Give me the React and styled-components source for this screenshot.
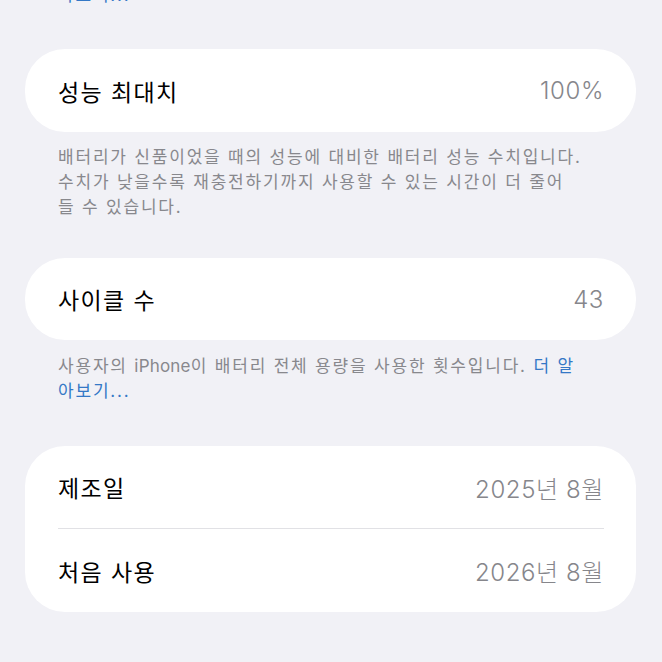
import React from "react";
import styled, { createGlobalStyle } from "styled-components";

const GlobalStyle = createGlobalStyle`
  html, body {
    margin: 0;
    padding: 0;
    background: #f1f1f6;
  }
  body {
    font-family: "Inter", "Noto Sans CJK KR", sans-serif;
    -webkit-font-smoothing: antialiased;
  }
`;

const Page = styled.div`
  width: 662px;
  height: 662px;
  overflow: hidden;
  background: #f1f1f6;
  box-sizing: border-box;
  padding: 0 26px 0 25px;
`;

const Scroll = styled.div`
  margin-top: -17px;
`;

const Card = styled.div`
  background: #ffffff;
  border-radius: 40px;
  overflow: hidden;
  margin-top: ${props => props.gap || 0}px;
`;

const Row = styled.div`
  height: ${props => props.h || 83}px;
  display: flex;
  align-items: center;
  justify-content: space-between;
  padding: 0 32px 0 33px;
`;

const Label = styled.span`
  font-size: 23px;
  color: #000000;
  letter-spacing: 1.4px;
`;

const Value = styled.span`
  font-size: 24px;
  font-weight: 300;
  color: #86868b;
  letter-spacing: 0.6px;
`;

const Divider = styled.div`
  height: 1px;
  background: #e1e1e5;
  margin: 0 32px 0 33px;
`;

const Footnote = styled.div`
  padding: 0 33px;
  margin-top: ${props => props.gap || 0}px;
  font-size: 17px;
  line-height: 25px;
  letter-spacing: 1.8px;
  color: #88888d;
`;

const Line = styled.div`
  white-space: nowrap;
`;

const Latin = styled.span`
  letter-spacing: 0.2px;
`;

const Link = styled.span`
  color: #3478c6;
`;

const App = () => (
  <>
    <GlobalStyle />
    <Page>
      <Scroll>
        <Footnote>
          <Line>
            <Link>아보기...</Link>
          </Line>
        </Footnote>
        <Card gap={41}>
          <Row>
            <Label>성능 최대치</Label>
            <Value>100%</Value>
          </Row>
        </Card>
        <Footnote gap={13}>
          <Line>배터리가 신품이었을 때의 성능에 대비한 배터리 성능 수치입니다.</Line>
          <Line>수치가 낮을수록 재충전하기까지 사용할 수 있는 시간이 더 줄어</Line>
          <Line>들 수 있습니다.</Line>
        </Footnote>
        <Card gap={38}>
          <Row h={82}>
            <Label>사이클 수</Label>
            <Value>43</Value>
          </Row>
        </Card>
        <Footnote gap={14}>
          <Line>
            사용자의 <Latin>iPhone</Latin>이 배터리 전체 용량을 사용한 횟수입니다. <Link>더 알</Link>
          </Line>
          <Line>
            <Link>아보기...</Link>
          </Line>
        </Footnote>
        <Card gap={42}>
          <Row h={82}>
            <Label>제조일</Label>
            <Value>2025년 8월</Value>
          </Row>
          <Divider />
          <Row h={83}>
            <Label>처음 사용</Label>
            <Value>2026년 8월</Value>
          </Row>
        </Card>
      </Scroll>
    </Page>
  </>
);

export default App;
